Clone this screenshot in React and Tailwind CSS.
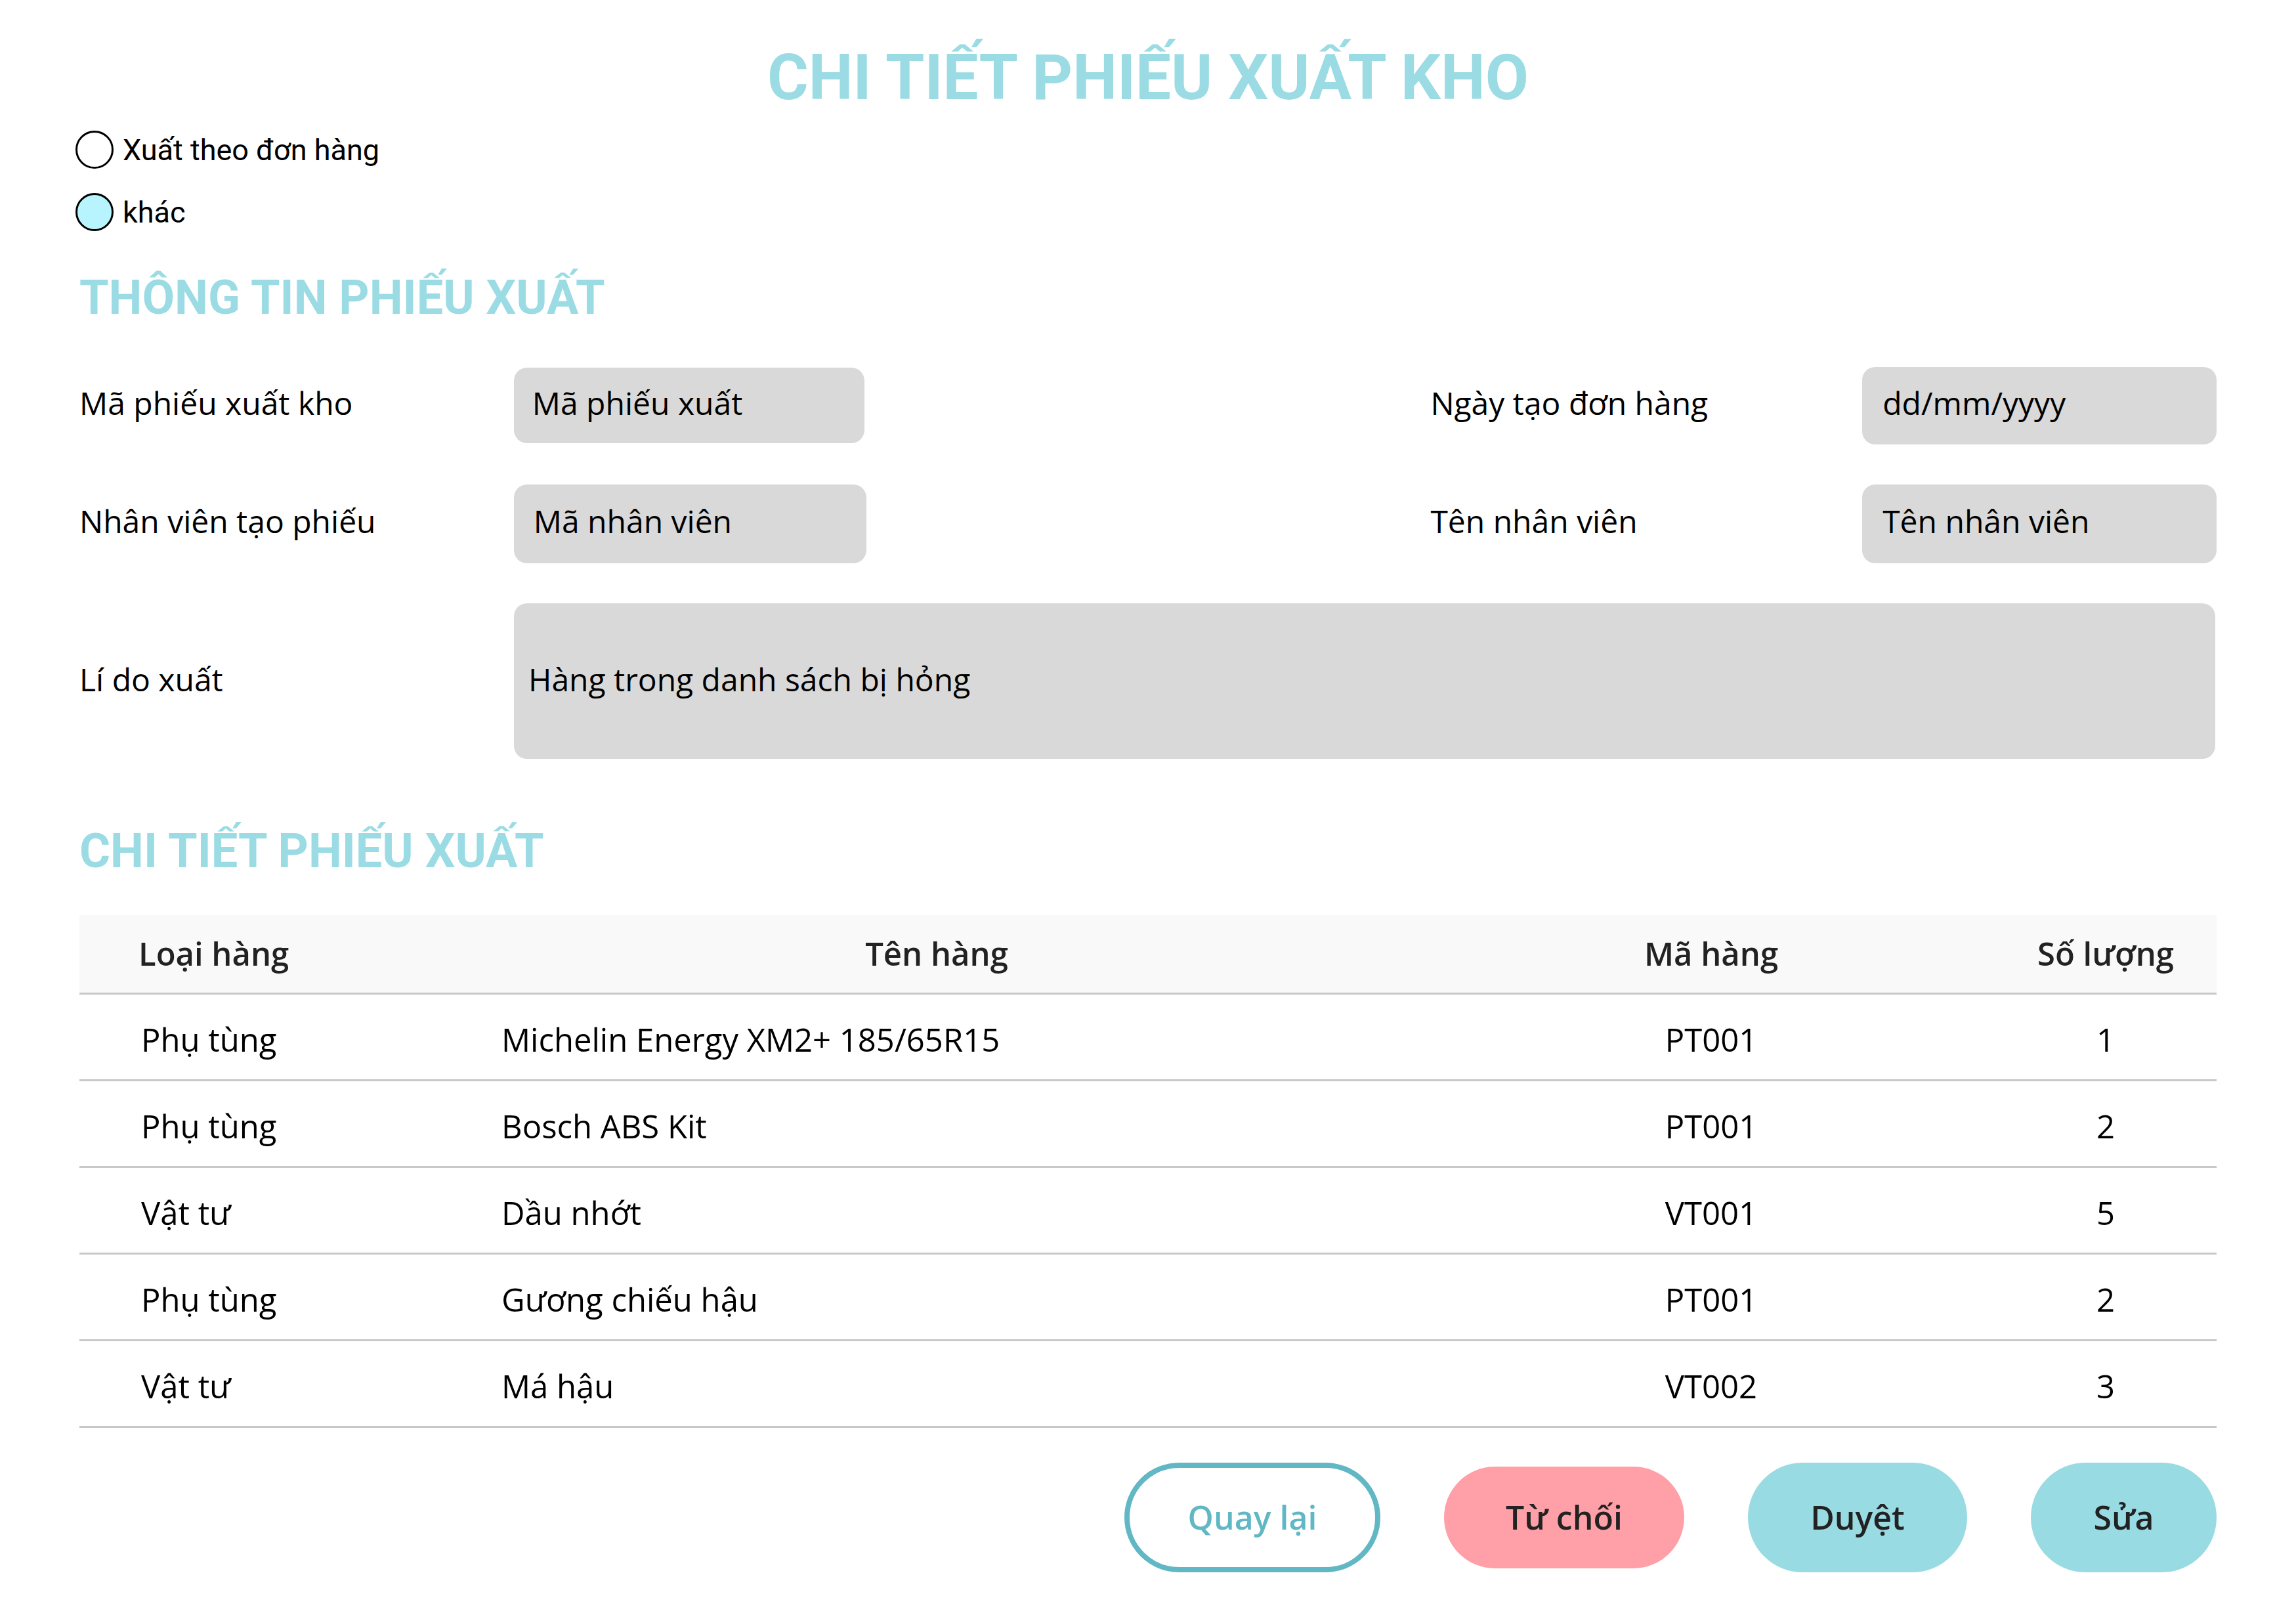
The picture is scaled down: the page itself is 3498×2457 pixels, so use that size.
import React from "react";

const rows = [
  ["Phụ tùng", "Michelin Energy XM2+ 185/65R15", "PT001", "1"],
  ["Phụ tùng", "Bosch ABS Kit", "PT001", "2"],
  ["Vật tư", "Dầu nhớt", "VT001", "5"],
  ["Phụ tùng", "Gương chiếu hậu", "PT001", "2"],
  ["Vật tư", "Má hậu", "VT002", "3"],
];

const openSans = { fontFamily: '"Open Sans", "Noto Sans", sans-serif' };

function Radio({ checked, label }) {
  return (
    <div className="flex items-center gap-[14px] -ml-[6px]">
      <div
        className={
          checked
            ? "w-[58px] h-[58px] rounded-full border-[3px] border-black bg-[#b8f4fd]"
            : "w-[58px] h-[58px] rounded-full border-[3px] border-black bg-white"
        }
      />
      <span className="text-[45px] leading-none text-black" style={{ fontFamily: 'Roboto, "Noto Sans", sans-serif' }}>
        {label}
      </span>
    </div>
  );
}

function SectionTitle({ children }) {
  return (
    <h2
      className="text-[72px] leading-none font-bold text-[#9adbe4]"
      style={{ fontFamily: 'Roboto, "Noto Sans", sans-serif' }}
    >
      {children}
    </h2>
  );
}

export default function App() {
  return (
    <div className="w-[3498px] min-h-[2457px] bg-white px-[121px] pt-[70px] pb-[60px]" style={openSans}>
      <h1
        className="text-center text-[96px] leading-none font-bold text-[#9adbe4]"
        style={{ fontFamily: 'Roboto, "Noto Sans", sans-serif' }}
      >
        CHI TIẾT PHIẾU XUẤT KHO
      </h1>

      <div className="mt-[33px] flex flex-col gap-[37px]">
        <Radio label="Xuất theo đơn hàng" />
        <Radio checked label="khác" />
      </div>

      <div className="mt-[66px]">
        <SectionTitle>THÔNG TIN PHIẾU XUẤT</SectionTitle>
      </div>

      <div className="mt-[69px] flex flex-col gap-[62px] text-[48px] text-black">
        <div className="flex items-center h-[117px]">
          <div className="w-[662px] pb-[8px]">Mã phiếu xuất kho</div>
          <div className="w-[534px] h-[115px] rounded-[20px] bg-[#d9d9d9] flex items-center pl-[28px] pb-[8px]">Mã phiếu xuất</div>
          <div className="w-[863px]" />
          <div className="w-[658px] pb-[8px]">Ngày tạo đơn hàng</div>
          <div className="w-[540px] h-[118px] rounded-[20px] bg-[#d9d9d9] flex items-center pl-[31px] pb-[8px]">dd/mm/yyyy</div>
        </div>
        <div className="flex items-center h-[120px]">
          <div className="w-[662px] pb-[8px]">Nhân viên tạo phiếu</div>
          <div className="w-[537px] h-[120px] rounded-[20px] bg-[#d9d9d9] flex items-center pl-[30px] pb-[8px]">Mã nhân viên</div>
          <div className="w-[860px]" />
          <div className="w-[658px] pb-[8px]">Tên nhân viên</div>
          <div className="w-[540px] h-[120px] rounded-[20px] bg-[#d9d9d9] flex items-center pl-[31px] pb-[8px]">Tên nhân viên</div>
        </div>
        <div className="flex items-center h-[237px] -mt-[1px]">
          <div className="w-[662px] pb-[6px]">Lí do xuất</div>
          <div className="w-[2592px] h-[237px] rounded-[20px] bg-[#d9d9d9] flex items-center pl-[22px] pb-[6px]">
            Hàng trong danh sách bị hỏng
          </div>
        </div>
      </div>

      <div className="mt-[105px]">
        <SectionTitle>CHI TIẾT PHIẾU XUẤT</SectionTitle>
      </div>

      <div className="mt-[61px] w-[3256px]">
        <div className="grid grid-cols-[558px_1496px_864px_338px] h-[121px] items-center bg-[#f9f9f9] border-b-[3px] border-[#c8c8c8] text-[49px] font-semibold text-[#222]">
          <div className="pl-[90px]">Loại hàng</div>
          <div className="text-center">Tên hàng</div>
          <div className="text-center">Mã hàng</div>
          <div className="text-center">Số lượng</div>
        </div>
        {rows.map((r, i) => (
          <div
            key={i}
            className="grid grid-cols-[558px_1496px_864px_338px] h-[132px] items-center border-b-[3px] border-[#c8c8c8] text-[49px] text-black"
          >
            <div className="pl-[94px] pt-[8px]">{r[0]}</div>
            <div className="pl-[85px] pt-[8px]">{r[1]}</div>
            <div className="text-center pt-[8px]">{r[2]}</div>
            <div className="text-center pt-[8px]">{r[3]}</div>
          </div>
        ))}
      </div>

      <div className="mt-[53px] flex justify-end items-center gap-[97px] text-[50px] font-semibold">
        <button className="w-[390px] h-[167px] rounded-full border-[8px] border-[#61b8c4] bg-white text-[#61b8c4]">
          Quay lại
        </button>
        <button className="w-[366px] h-[155px] rounded-full bg-[#ffa0a8] text-[#222]">Từ chối</button>
        <button className="w-[334px] h-[167px] rounded-full bg-[#99dbe3] text-[#222]">Duyệt</button>
        <button className="w-[283px] h-[167px] rounded-full bg-[#99dbe3] text-[#222]">Sửa</button>
      </div>
    </div>
  );
}
